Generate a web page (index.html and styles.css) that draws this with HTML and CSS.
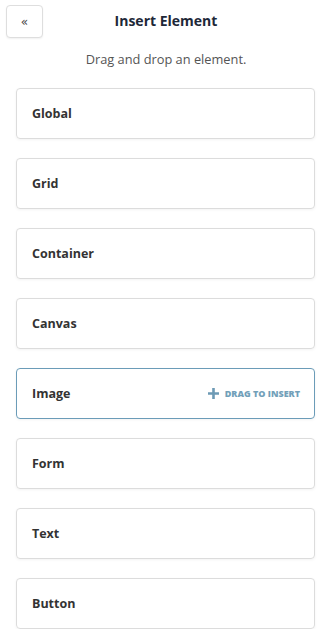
FILE: index.html
```html
<!DOCTYPE html>
<html lang="en">
<head>
    <meta charset="UTF-8">
    <meta name="viewport" content="width=device-width, initial-scale=1.0">
    <title>Insert Element</title>
    <link rel="stylesheet" href="styles.css">
</head>
<body>
    <header>
        <button class="back">&laquo;</button>
        <h1>Insert Element</h1>
    </header>
    <p class="hint">Drag and drop an element.</p>
    <div class="elements">
        <div class="element">Global</div>
        <div class="element">Grid</div>
        <div class="element">Container</div>
        <div class="element">Canvas</div>
        <div class="element active">
            Image
            <span class="drag">
                <svg class="plus" width="11" height="11" viewBox="0 0 11 11"><path d="M5.5 0v11M0 5.5h11" stroke="#6d9ab5" stroke-width="2.6"/></svg>
                Drag to insert
            </span>
        </div>
        <div class="element">Form</div>
        <div class="element">Text</div>
        <div class="element">Button</div>
    </div>
</body>
</html>
```

FILE: styles.css
```css
body {
    font-family: "Open Sans", Lato, sans-serif;
    margin: 0;
    padding: 0;
    background: #fff;
    width: 332px;
}
header {
    position: relative;
    height: 42px;
    display: flex;
    align-items: center;
    justify-content: center;
}
header .back {
    position: absolute;
    left: 6px;
    top: 5px;
    width: 37px;
    height: 33px;
    background: #fff;
    border: 1px solid #dedede;
    border-radius: 4px;
    box-shadow: 0 1px 2px rgba(0, 0, 0, 0.06);
    color: #444;
    font-size: 12px;
    font-family: "DejaVu Sans", sans-serif;
    padding: 0;
}
header h1 {
    margin: 0;
    font-size: 14px;
    font-weight: 700;
    color: #1e2838;
    margin-top: -2px;
}
.hint {
    margin: 8px 0 0;
    text-align: center;
    font-size: 12.8px;
    color: #555;
    line-height: 18px;
}
.elements {
    display: flex;
    flex-direction: column;
    gap: 19px;
    padding: 20px 17px 0 16px;
}
.element {
    height: 49px;
    border: 1px solid #dcdcdc;
    border-radius: 4px;
    box-shadow: 0 1px 3px rgba(0, 0, 0, 0.05);
    display: flex;
    align-items: center;
    justify-content: space-between;
    padding: 0 14px 0 15px;
    font-size: 12.5px;
    font-weight: 700;
    color: #333;
}
.element.active {
    border-color: #6b9cb8;
}
.drag {
    display: flex;
    align-items: center;
    font-size: 9px;
    font-weight: 800;
    text-transform: uppercase;
    color: #72a0b9;
}
.drag .plus {
    margin-right: 6px;
}
```
